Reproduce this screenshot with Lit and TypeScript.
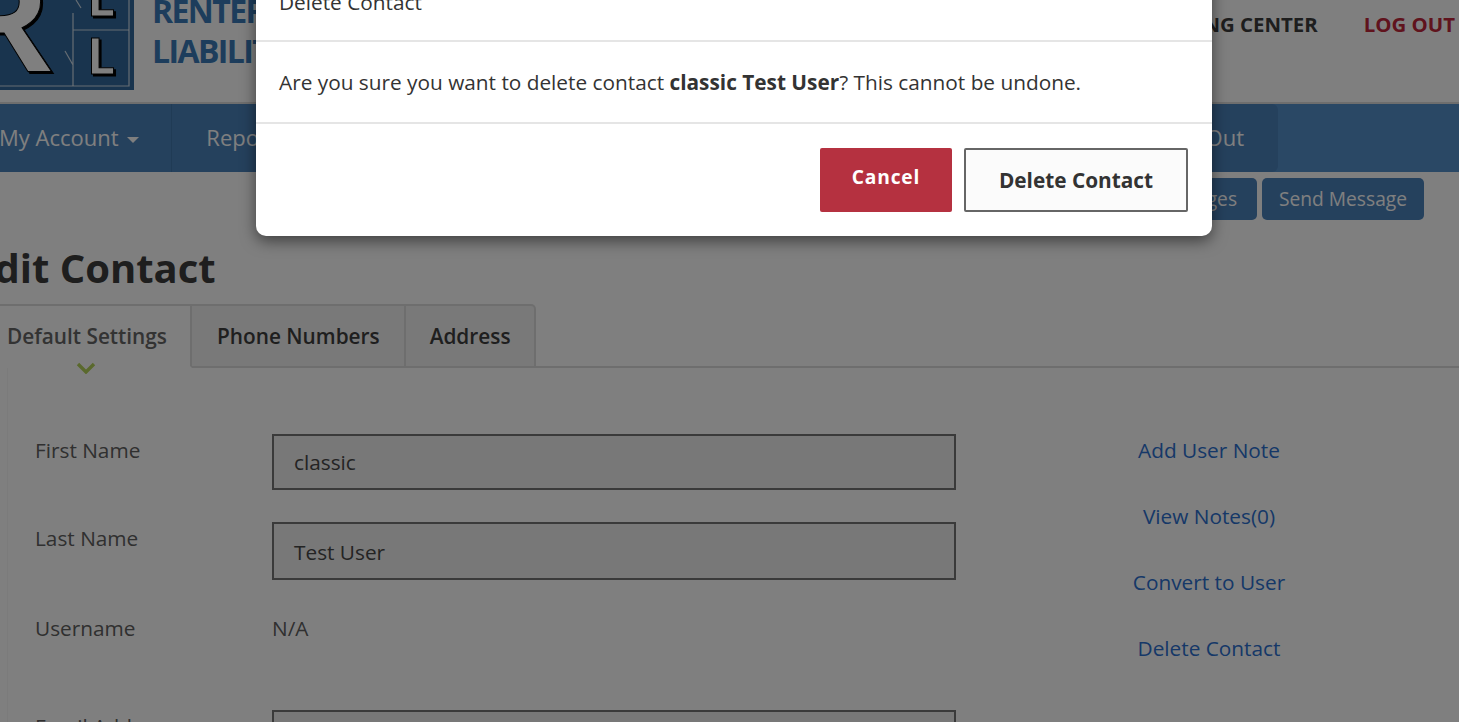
import { LitElement, html, css } from "lit";
import { customElement } from "lit/decorators.js";

@customElement("app-root")
export class AppRoot extends LitElement {
  static styles = css`
    :host { display: block; position: relative; width: 1459px; height: 722px; overflow: hidden; background: #fff; font-family: "Open Sans", sans-serif; font-size: 20.8px; color: #444; }
    .page { height: 722px; overflow: hidden; }
    .top { height: 102px; display: flex; align-items: flex-start; overflow: hidden; }
    .logo { display: block; flex: none; }
    .logo text { font-family: "Open Sans", sans-serif; font-weight: 700; fill: #fff; stroke: #000; stroke-width: 1; filter: drop-shadow(2px 2px 0 #000); }
    .logo path { fill: none; stroke: #fff; stroke-width: 1.2; opacity: .75; }
    .brand { margin-left: 18px; margin-top: -9px; width: 600px; font-weight: 700; font-size: 32px; letter-spacing: -1.6px; line-height: 40px; color: #3a7ab8; }
    .toplinks { margin-left: auto; display: flex; gap: 46px; padding: 11px 4px 0 0; font-weight: 700; font-size: 20.4px; line-height: 27px; color: #3c3c3c; }
    .red { color: #c0273a; }
    .nav { height: 68px; border-top: 2px solid #dcdcdc; background: #5490cb; display: flex; color: #fff; line-height: 66px; font-size: 22px; padding-right: 181px; }
    .nav .item { padding: 0 34px; background: #4a82bb; border-right: 1px solid #4176ab; white-space: nowrap; }
    .nav .first { padding: 0 32px 0 0; text-indent: -1px; }
    .caret { display: inline-block; border: 6px solid transparent; border-top-color: #fff; border-bottom: 0; vertical-align: middle; margin-left: 3px; }
    .nav .spacer { flex: 1; }
    .nav .active { background: #4a82bb; border-radius: 6px; padding: 0 34px; white-space: nowrap; }
    .sub { display: flex; justify-content: flex-end; gap: 5px; padding: 6px 35px 0 0; }
    .sub span { background: #4a82bb; color: #fff; border-radius: 5px; height: 42px; line-height: 42px; padding: 0 17px; font-size: 19.2px; }
    .sub span:first-child { padding-right: 20px; }
    h1 { margin: 24px 0 0 -28px; font-size: 40px; line-height: 48px; font-weight: 700; color: #3c3c3c; }
    .tabs { display: flex; height: 62px; margin-top: 12px; border-bottom: 2px solid #ddd; }
    .tab { position: relative; box-sizing: border-box; height: 64px; padding: 0 24px 0 25px; border: 2px solid #ddd; border-left-width: 0; font-weight: 600; line-height: 60px; background: #f2f2f2; color: #3e3e3e; white-space: nowrap; }
    .tab.on { width: 192px; padding-left: 7px; background: #fff; border-bottom-color: #fff; color: #666; }
    .tab:last-child { border-top-right-radius: 5px; padding: 0 23px 0 24px; }
    .chev { position: absolute; left: 76px; top: 56px; display: block; }
    .body { display: grid; grid-template-columns: 1000px 1fr; margin-left: 7px; border-left: 1px solid #f6f6f6; padding: 0 0 0 27px; }
    .row { display: grid; grid-template-columns: 237px 684px; align-items: start; }
    .lab { color: #606060; line-height: 28px; white-space: nowrap; }
    .inp { box-sizing: border-box; border: 2px solid #757575; padding: 0 20px; color: #484848; background: #f0f0f0; display: flex; align-items: center; }
    .links { display: flex; flex-direction: column; align-items: center; width: 152px; margin-left: 98px; gap: 38px; padding-top: 68px; color: #2c70d0; line-height: 28px; white-space: nowrap; }
    .form { padding-top: 66px; }
    .r1 { height: 88px; } .r1 .inp { height: 56px; } .r1 .lab { margin-top: 2px; }
    .r2 { height: 90px; } .r2 .inp { height: 58px; padding-top: 1px; } .r2 .lab { margin-top: 2px; }
    .r3 { height: 98px; } .r3 .lab { margin-top: 2px; }
    .r4 .inp { height: 56px; } .r4 .lab { margin-top: 2px; }

    .overlay { position: absolute; inset: 0; background: rgba(0,0,0,.5); }
    .modal { position: absolute; left: 256px; top: -30px; width: 956px; height: 266px; background: #fff; border-radius: 0 0 10px 10px; box-shadow: 0 5px 15px rgba(0,0,0,.5); color: #333; }
    .mh { height: 72px; box-sizing: border-box; border-bottom: 2px solid #e5e5e5; padding: 18px 23px 0; line-height: 28px; }
    .mb { height: 82px; box-sizing: border-box; border-bottom: 2px solid #e5e5e5; padding: 0 23px; line-height: 80px; white-space: nowrap; }
    .mf { display: flex; justify-content: flex-end; gap: 12px; padding: 24px 24px 0 0; }
    .btn { box-sizing: border-box; height: 64px; border-radius: 2px; font-weight: 700; display: flex; align-items: center; justify-content: center; }
    .cancel { width: 132px; background: #b53140; color: #fff; font-size: 19.2px; letter-spacing: .8px; padding-bottom: 8px; }
    .del { width: 224px; background: #fbfbfb; border: 2px solid #666; color: #333; }
  `;

  render() {
    return html`
      <div class="page">
        <div class="top">
          <svg class="logo" width="134" height="90" viewBox="0 0 134 90">
            <rect width="134" height="90" fill="#33699c"/>
            <path d="M0 86H129V0"/>
            <path d="M73 30H129M73 13V86M73 65L65 51M76 0L81 8"/>
            <text x="-41" y="71" font-size="140">R</text>
            <text x="87" y="16" font-size="50">L</text>
            <text x="87" y="74" font-size="50">L</text>
          </svg>
          <div class="brand">RENTERS<br />LIABILITY</div>
          <div class="toplinks"><span>LEARNING CENTER</span><span class="red">LOG OUT</span></div>
        </div>
        <div class="nav">
          <div class="item first">My Account <i class="caret"></i></div>
          <div class="item">Reports</div>
          <div class="spacer"></div>
          <div class="active">Log Out</div>
        </div>
        <div class="sub"><span>Messages</span><span>Send Message</span></div>
        <h1>Edit Contact</h1>
        <div class="tabs">
          <div class="tab on">Default Settings
            <svg class="chev" width="20" height="12" viewBox="0 0 20 12"><path d="M2 2L10 10L18 2" fill="none" stroke="#b5d35a" stroke-width="3.4"/></svg>
          </div>
          <div class="tab">Phone Numbers</div>
          <div class="tab">Address</div>
        </div>
        <div class="body">
          <div class="form">
            <div class="row r1"><div class="lab">First Name</div><div class="inp">classic</div></div>
            <div class="row r2"><div class="lab">Last Name</div><div class="inp">Test User</div></div>
            <div class="row r3"><div class="lab">Username</div><div class="lab">N/A</div></div>
            <div class="row r4"><div class="lab">Email Address</div><div class="inp"></div></div>
          </div>
          <div class="links"><span>Add User Note</span><span>View Notes(0)</span><span>Convert to User</span><span>Delete Contact</span></div>
        </div>
      </div>
      <div class="overlay"></div>
      <div class="modal">
        <div class="mh">Delete Contact</div>
        <div class="mb">Are you sure you want to delete contact <b>classic Test User</b>? This cannot be undone.</div>
        <div class="mf"><div class="btn cancel">Cancel</div><div class="btn del">Delete Contact</div></div>
      </div>
    `;
  }
}
